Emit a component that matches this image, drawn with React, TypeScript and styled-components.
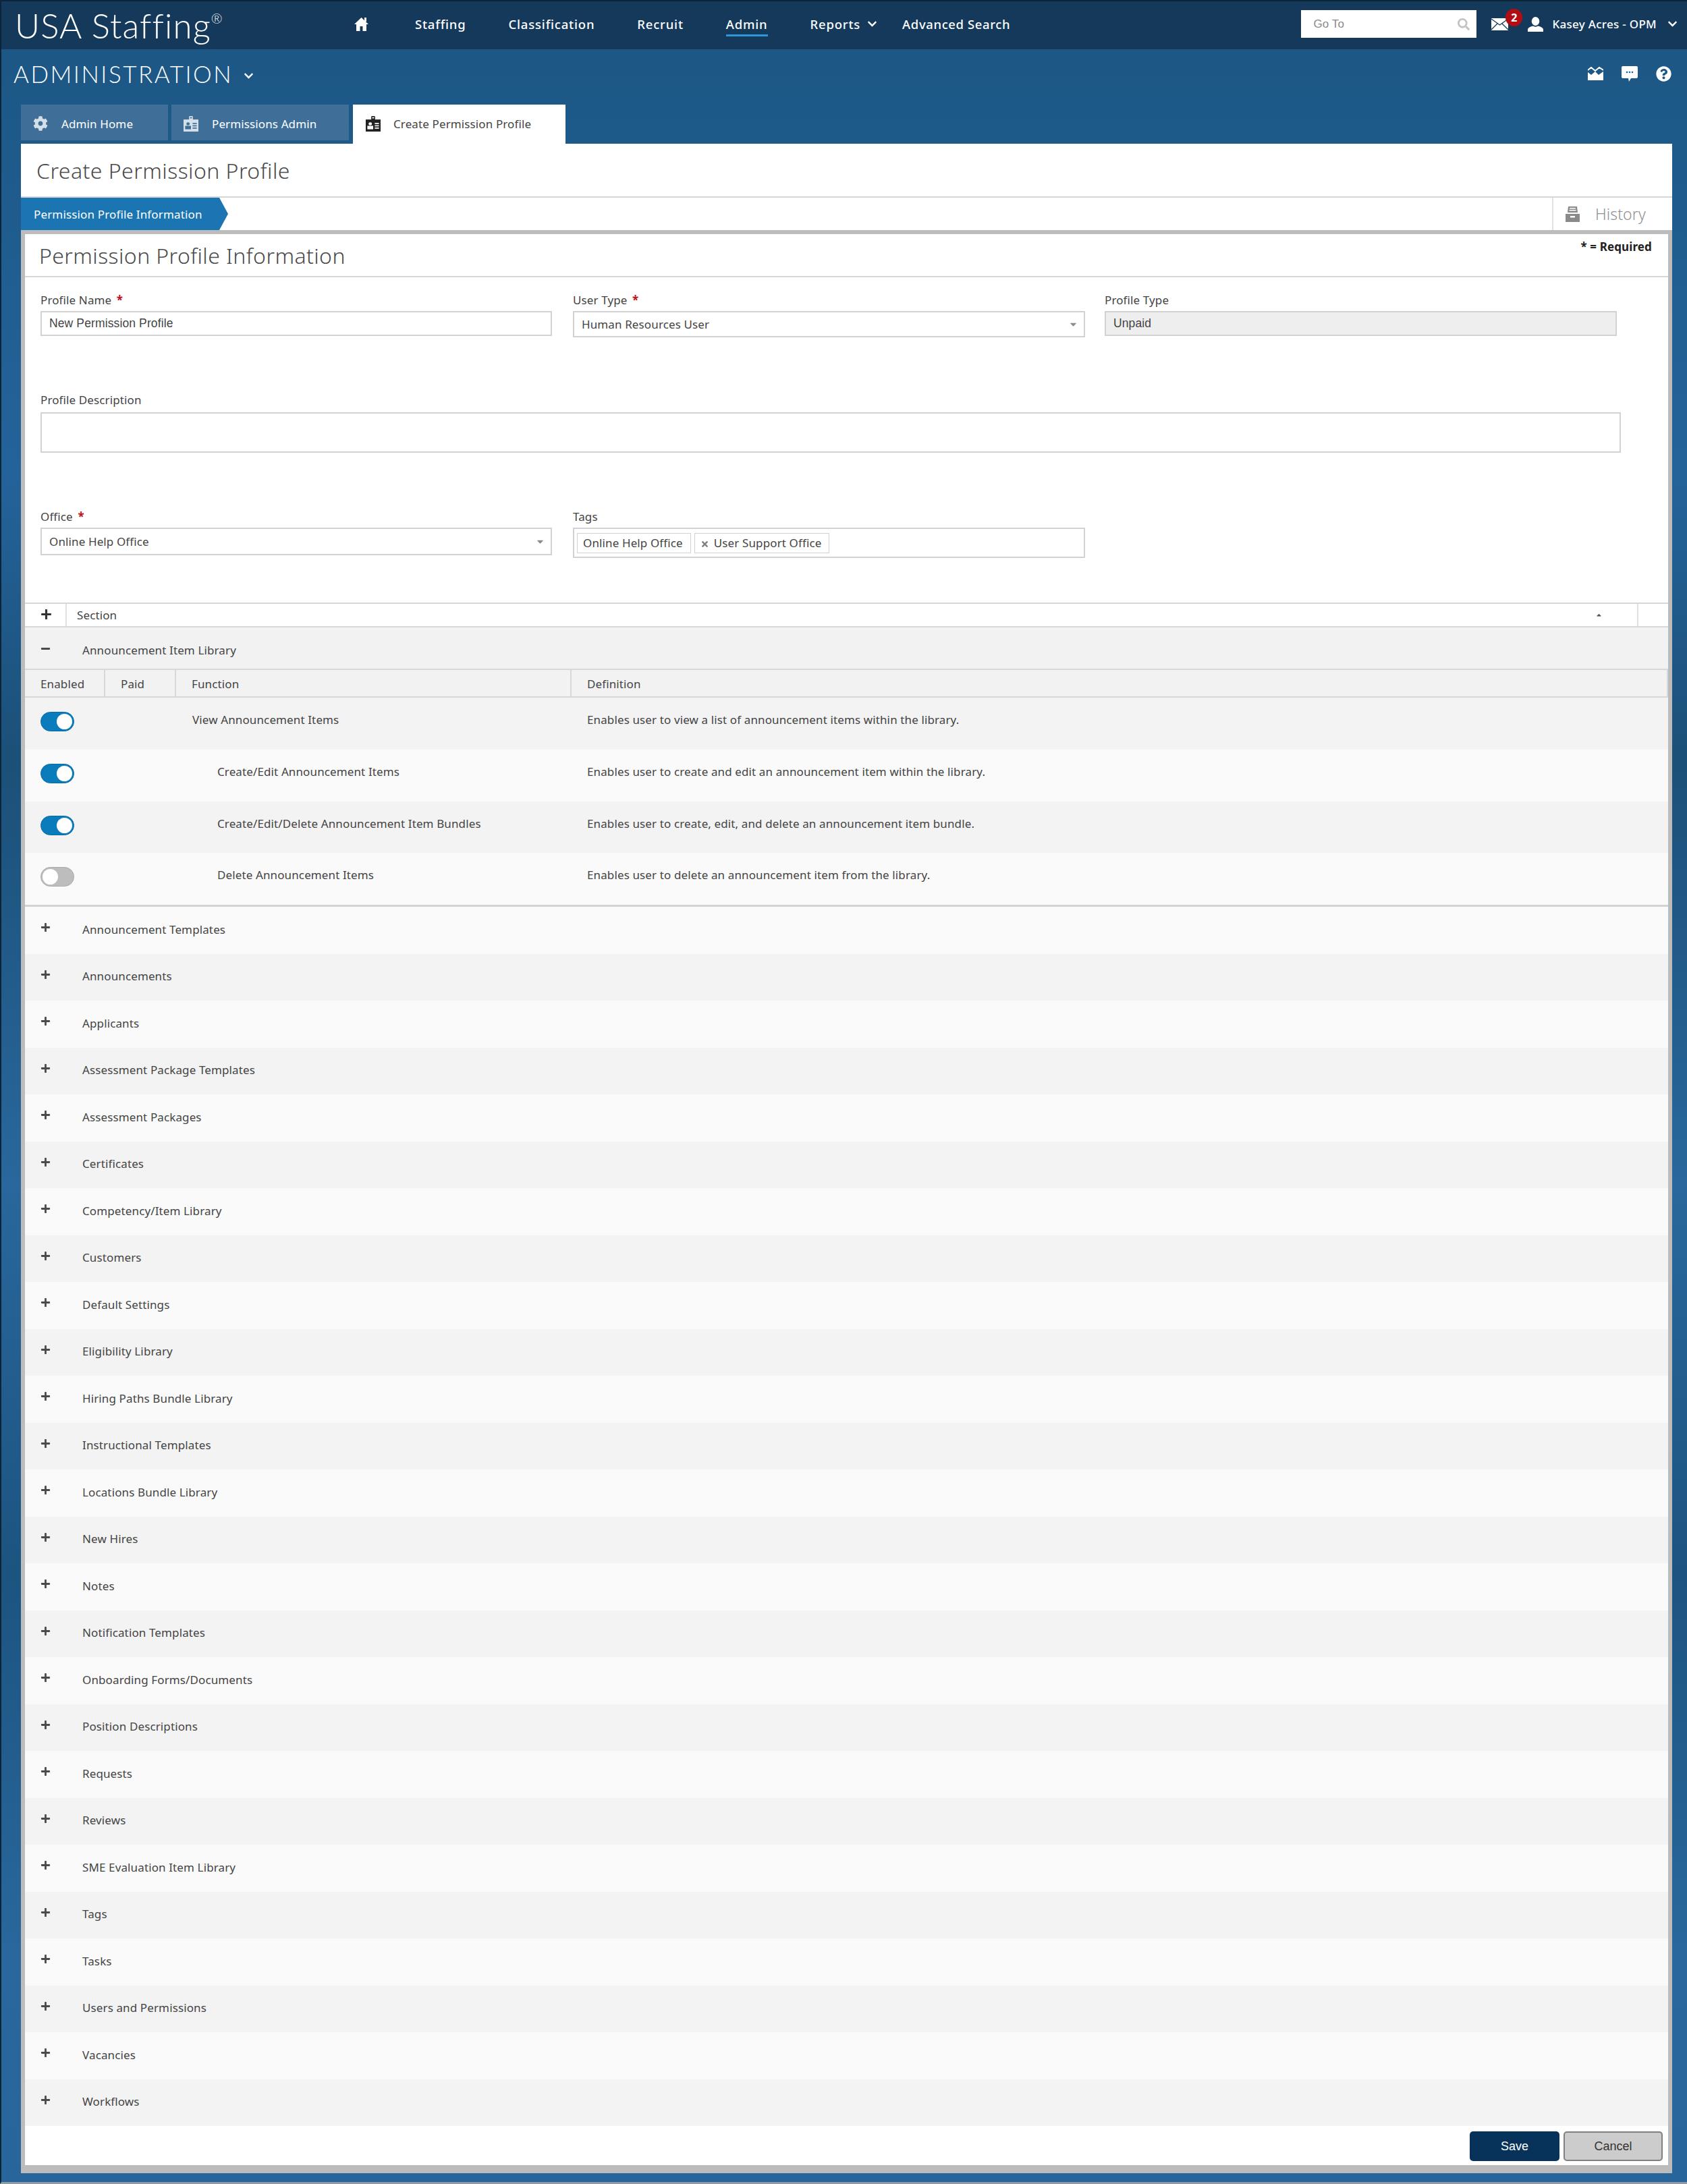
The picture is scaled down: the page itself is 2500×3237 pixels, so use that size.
import React from 'react';
import styled, { createGlobalStyle } from 'styled-components';
import { FaCog, FaSearch, FaChevronDown, FaQuestionCircle, FaCaretDown, FaCaretUp, FaPlus, FaMinus, FaTimes } from 'react-icons/fa';

const GlobalStyle = createGlobalStyle`
  html, body {
    margin: 0;
    padding: 0;
    background: #1f5d8f;
  }
  * {
    box-sizing: border-box;
  }
`;

const FONT = `'Noto Sans', 'Open Sans', sans-serif`;

const Page = styled.div`
  width: 2500px;
  height: 3237px;
  overflow: hidden;
  font-family: ${FONT};
  letter-spacing: 0.12px;
  color: #333;
  border-left: 2px solid #0c2438;
  border-bottom: 3px solid #8e9aa4;
  background: linear-gradient(180deg, #1c5785 74px, #24639a 700px, #1b5078 1125px, #29679c 1755px, #1c5480 2333px, #29679c 2890px, #27659a 3237px);
`;

const TopBar = styled.header`
  height: 73px;
  display: flex;
  align-items: center;
  background: #15395b;
  border-top: 2px solid #0c2438;
  padding: 0 0 4px 20px;
  color: #fff;
`;

const Logo = styled.div`
  width: 503px;
  font-family: 'Lato', sans-serif;
  font-weight: 300;
  font-size: 51px;
  letter-spacing: 1.1px;
  line-height: 60px;
  margin-top: 4px;
  sup {
    font-size: 20px;
    vertical-align: 22px;
    line-height: 0;
    letter-spacing: 0;
  }
`;

const Nav = styled.nav`
  display: flex;
  align-items: center;
  gap: 63px;
  font-size: 18.5px;
  font-weight: 500;
  letter-spacing: 0.8px;
`;

const HomeLink = styled.span`
  display: flex;
  margin-right: 6px;
`;

const NavItem = styled.span<{ $active?: boolean; $tight?: boolean }>`
  position: relative;
  display: flex;
  align-items: center;
  gap: 10px;
  height: 34px;
  margin-top: 3px;
  margin-left: ${p => (p.$tight ? -26 : 0)}px;
  letter-spacing: ${p => (p.$tight ? 0.6 : 0.8)}px;
  border-bottom: 3px solid ${p => (p.$active ? '#2f97d6' : 'transparent')};
  svg {
    font-size: 15px;
  }
`;

const TopRight = styled.div`
  margin-left: auto;
  display: flex;
  align-items: center;
  padding-right: 14px;
`;

const GoTo = styled.div`
  width: 260px;
  height: 41px;
  background: #fff;
  display: flex;
  align-items: center;
  justify-content: space-between;
  padding: 0 10px 0 18px;
  font-family: 'Liberation Sans', sans-serif;
  font-size: 17px;
  color: #8a8a8a;
  svg {
    color: #c4c4c4;
    font-size: 18px;
  }
`;

const Mail = styled.span`
  position: relative;
  display: flex;
  margin: 0 29px 0 22px;
`;

const Badge = styled.span`
  position: absolute;
  left: 21px;
  top: -14px;
  width: 25px;
  height: 26px;
  border-radius: 50%;
  background: #b30d14;
  color: #fff;
  font-size: 16px;
  font-weight: 700;
  line-height: 26px;
  text-align: center;
`;

const UserName = styled.span`
  margin: 0 16px 0 13px;
  font-size: 17px;
  font-weight: 500;
  letter-spacing: 0.3px;
  white-space: nowrap;
`;

const SubHeader = styled.div`
  height: 82px;
  display: flex;
  align-items: center;
  justify-content: space-between;
  padding: 0 23px 10px 18px;
  color: #fff;
`;

const ModuleTitle = styled.h1`
  margin: 0;
  display: flex;
  align-items: center;
  gap: 16px;
  font-family: 'Lato', sans-serif;
  font-weight: 300;
  font-size: 35px;
  letter-spacing: 2.5px;
  svg {
    font-size: 15px;
    margin-top: 6px;
  }
`;

const ActionIcons = styled.div`
  display: flex;
  align-items: center;
  gap: 27px;
`;

const Content = styled.div`
  margin: 0 22px 0 29px;
`;

const Tabs = styled.div`
  display: flex;
  align-items: flex-start;
  height: 58px;
  gap: 5px;
`;

const Tab = styled.div<{ $active?: boolean; $width: number }>`
  width: ${p => p.$width}px;
  height: ${p => (p.$active ? 58 : 53)}px;
  display: flex;
  align-items: center;
  padding-left: ${p => (p.$active ? 19 : 18)}px;
  padding-top: ${p => (p.$active ? 0 : 3)}px;
  padding-bottom: ${p => (p.$active ? 2 : 0)}px;
  gap: ${p => (p.$active ? 19 : 20)}px;
  font-size: 17px;
  background: ${p => (p.$active ? '#fff' : '#3f6f99')};
  color: ${p => (p.$active ? '#444' : '#fff')};
  margin-left: ${p => (p.$active ? 1 : 0)}px;
  svg {
    flex: none;
  }
`;

const PageTitle = styled.h2`
  margin: 0;
  height: 80px;
  display: flex;
  align-items: center;
  background: #fff;
  padding: 0 0 0 23px;
  font-family: ${FONT};
  font-weight: 300;
  font-size: 32px;
  letter-spacing: 0.45px;
  color: #4a4a4a;
  border-bottom: 2px solid #d6d6d6;
`;

const StepBar = styled.div`
  height: 48px;
  display: flex;
  justify-content: space-between;
  background: #fff;
`;

const Step = styled.div`
  width: 307px;
  display: flex;
  align-items: center;
  padding-left: 19px;
  background: #1b75b3;
  color: #fff;
  font-size: 17px;
  letter-spacing: 0.15px;
  clip-path: polygon(0 0, 294px 0, 100% 50%, 294px 100%, 0 100%);
`;

const HistoryTab = styled.div`
  width: 178px;
  display: flex;
  align-items: center;
  gap: 23px;
  padding-left: 18px;
  border-left: 2px solid #e2e2e2;
  font-size: 23px;
  font-weight: 300;
  color: #8f8f8f;
`;

const Frame = styled.div`
  border: 6px solid #bcbcbc;
  border-bottom-width: 12px;
  background: #fff;
  height: 2880px;
`;

const PanelHead = styled.div`
  height: 64px;
  display: flex;
  justify-content: space-between;
  border-bottom: 2px solid #d6d6d6;
  padding: 0 24px 0 21px;
`;

const PanelTitle = styled.h3`
  margin: 0;
  font-weight: 300;
  font-size: 32px;
  line-height: 64px;
  letter-spacing: 0.4px;
  color: #4a4a4a;
`;

const Required = styled.span`
  font-size: 17px;
  font-weight: 700;
  line-height: 38px;
  color: #222;
`;

const Form = styled.div`
  height: 482px;
  padding: 22px 0 0 23px;
`;

const FieldRow = styled.div<{ $height: number }>`
  height: ${p => p.$height}px;
  display: grid;
  grid-template-columns: 789px 788px 759px;
  align-items: start;
`;

const Field = styled.label<{ $width?: number }>`
  display: block;
  width: ${p => p.$width ?? 759}px;
`;

const FieldLabel = styled.div`
  height: 28px;
  font-size: 17px;
  line-height: 24px;
  color: #444;
  b {
    color: #c1121c;
    font-weight: 700;
    margin-left: 3px;
  }
`;

const Box = styled.div<{ $height: number; $disabled?: boolean; $plain?: boolean }>`
  height: ${p => p.$height}px;
  display: flex;
  align-items: center;
  justify-content: space-between;
  padding: 0 11px;
  border: 2px solid #d2d2d2;
  background: ${p => (p.$disabled ? '#eeeeee' : '#fff')};
  font-family: ${p => (p.$plain ? `'Liberation Sans', sans-serif` : 'inherit')};
  font-size: ${p => (p.$plain ? 17.5 : 17)}px;
  color: #444;
  svg {
    color: #8c8c8c;
    font-size: 15px;
    margin-right: -3px;
  }
`;

const DescriptionBox = styled.div`
  width: 2342px;
  height: 60px;
  margin-top: 2px;
  border: 2px solid #d2d2d2;
`;

const TagBox = styled.div`
  height: 45px;
  display: flex;
  align-items: center;
  gap: 5px;
  padding: 0 4px;
  border: 2px solid #d2d2d2;
`;

const Chip = styled.span`
  height: 30px;
  display: flex;
  align-items: center;
  gap: 7px;
  padding: 0 11px 0 8px;
  border: 1px solid #d2d2d2;
  font-size: 17px;
  color: #444;
  svg {
    color: #808080;
    font-size: 13px;
    margin-top: 3px;
  }
`;

const SectionHead = styled.div`
  position: relative;
  height: 37px;
  display: grid;
  grid-template-columns: 62px 1fr;
  align-items: stretch;
  border-top: 2px solid #d8d8d8;
  border-bottom: 2px solid #d8d8d8;
  font-size: 17px;
  color: #444;
  padding-right: 60px;
`;

const ExpandAll = styled.span`
  display: flex;
  align-items: center;
  justify-content: center;
  padding: 0 0 2px 2px;
  border-right: 2px solid #e0e0e0;
  font-size: 17px;
  color: #333;
`;

const SectionText = styled.span`
  display: flex;
  align-items: center;
  justify-content: space-between;
  padding: 0 37px 0 15px;
  svg {
    font-size: 11px;
    color: #555;
  }
`;

const SectionEnd = styled.span`
  position: absolute;
  right: 44px;
  top: 0;
  bottom: 0;
  width: 2px;
  background: #e0e0e0;
`;

const OpenGroup = styled.div`
  background: #f2f2f2;
  border-bottom: 3px solid #d2d2d2;
`;

const GroupTitle = styled.div`
  height: 63px;
  display: flex;
  align-items: center;
  padding: 6px 0 0 23px;
  gap: 29px;
  font-size: 17px;
  color: #444;
  border-bottom: 2px solid #d8d8d8;
`;

const ToggleGlyph = styled.span`
  width: 33px;
  display: flex;
  margin-top: -5px;
  color: #4a4a4a;
  font-size: 15px;
`;

const ColumnsHead = styled.div`
  height: 41px;
  display: grid;
  grid-template-columns: 119px 105px 586px 1fr;
  border-bottom: 2px solid #d8d8d8;
  border-right: 2px solid #d8d8d8;
  font-size: 17px;
  color: #444;
`;

const ColumnCell = styled.span<{ $pad: number }>`
  display: flex;
  align-items: center;
  padding: 2px 0 0 ${p => p.$pad}px;
  border-right: 2px solid #d8d8d8;
  &:last-child {
    border-right: 0;
  }
`;

const PermissionRow = styled.div<{ $odd: boolean }>`
  height: 76.75px;
  display: grid;
  grid-template-columns: 211px 576px 1fr;
  align-items: flex-start;
  padding-left: 23px;
  background: ${p => (p.$odd ? '#f3f3f3' : '#fafafa')};
  font-size: 17px;
  color: #444;
`;

const Switch = styled.span<{ $on: boolean }>`
  position: relative;
  display: block;
  width: 50px;
  height: 29px;
  margin-top: 21px;
  border-radius: 15px;
  background: ${p => (p.$on ? '#0a7cbc' : '#bdbdbd')};
  border: 1px solid ${p => (p.$on ? '#066ca8' : '#aaa')};
`;

const Knob = styled.span<{ $on: boolean }>`
  position: absolute;
  top: 2px;
  left: ${p => (p.$on ? 23 : 2)}px;
  width: 23px;
  height: 23px;
  border-radius: 50%;
  background: #fff;
`;

const FunctionName = styled.span<{ $child: boolean }>`
  padding-left: ${p => (p.$child ? 51 : 14)}px;
  line-height: 24px;
  margin-top: 21px;
`;

const DefinitionText = styled.span`
  padding-left: 23px;
  line-height: 24px;
  margin-top: 21px;
`;

const Groups = styled.div`
  display: grid;
  grid-auto-rows: 69.5px;
`;

const GroupRow = styled.div<{ $odd: boolean }>`
  display: flex;
  align-items: center;
  padding: 0 0 3px 23px;
  gap: 29px;
  background: ${p => (p.$odd ? '#f3f3f3' : '#fafafa')};
  font-size: 17px;
  color: #444;
`;

const Footer = styled.div`
  height: 58px;
  display: flex;
  justify-content: flex-end;
  align-items: flex-start;
  gap: 6px;
  padding: 8px 8px 0 0;
`;

const Button = styled.button<{ $primary?: boolean }>`
  width: ${p => (p.$primary ? 133 : 147)}px;
  height: 44px;
  border-radius: 5px;
  font-family: 'Liberation Sans', sans-serif;
  font-size: 18px;
  color: ${p => (p.$primary ? '#fff' : '#333')};
  background: ${p => (p.$primary ? '#07335a' : '#cccccc')};
  border: ${p => (p.$primary ? '0' : '2px solid #808080')};
`;

function HomeIcon() {
  return (
    <svg width="21" height="21" viewBox="0 0 21 21" fill="#fff">
      <path d="M10.5 1L21 11h-3v10h-5.500v-7h-4v7H3V11H0z" />
      <rect x="15" y="1" width="3" height="6" />
    </svg>
  );
}

function BadgeIcon({ color, hole }: { color: string; hole: string }) {
  return (
    <svg width="22" height="23" viewBox="0 0 23 27" preserveAspectRatio="none">
      <rect x="8.5" y="0" width="6" height="7" rx="1.5" fill={color} />
      <rect x="0" y="6" width="23" height="21" fill={color} />
      <rect x="10" y="2" width="3" height="2" fill={hole} />
      <circle cx="7" cy="13.5" r="2.6" fill={hole} />
      <rect x="2.5" y="17" width="9" height="6" fill={hole} />
      <rect x="14" y="12" width="6.5" height="2" fill={hole} />
      <rect x="14" y="16" width="6.5" height="2" fill={hole} />
      <rect x="14" y="20" width="6.5" height="2" fill={hole} />
    </svg>
  );
}

function MailIcon() {
  return (
    <svg width="25" height="18" viewBox="0 0 25 18">
      <rect width="25" height="18" fill="#fff" />
      <path d="M0 1l12.5 9L25 1M0 17l9-9M25 17l-9-9" fill="none" stroke="#15395b" strokeWidth="1.3" />
    </svg>
  );
}

function UserIcon() {
  return (
    <svg width="23" height="22" viewBox="0 0 23 22" fill="#fff">
      <ellipse cx="11.5" cy="6.5" rx="5.8" ry="6.5" />
      <path d="M0 22v-3c0-3 4-4.500 7.500-5.500 2.500 1.500 5.500 1.500 8 0C19 14.500 23 16 23 19v3z" />
    </svg>
  );
}

function ChartIcon() {
  return (
    <svg width="23" height="20" viewBox="0 0 23 20" fill="#fff">
      <path d="M0 8l5 4 6-5 5 5 7-5v13H0z" />
      <path d="M0 5l5-4 6 5 6-5 6 4" fill="none" stroke="#fff" strokeWidth="2" />
    </svg>
  );
}

function CommentIcon() {
  return (
    <svg width="24" height="23" viewBox="0 0 24 23">
      <path d="M2 0h20a2 2 0 0 1 2 2v14a2 2 0 0 1-2 2h-8l-3 5-1-5H2a2 2 0 0 1-2-2V2a2 2 0 0 1 2-2z" fill="#fff" />
      <circle cx="8" cy="9" r="1.300" fill="#1f5d8f" />
      <circle cx="12" cy="9" r="1.300" fill="#1f5d8f" />
      <circle cx="16" cy="9" r="1.300" fill="#1f5d8f" />
    </svg>
  );
}

function ArchiveIcon() {
  return (
    <svg width="21" height="23" viewBox="0 0 21 23" fill="#8a8a8a">
      <path d="M4 0h13l1 9H3zM6 2v1.500h9V2zM5.500 5v1.500h10V5z" fillRule="evenodd" />
      <path d="M0 11h21v12H0zM7 14v2.500h7V14z" fillRule="evenodd" />
    </svg>
  );
}

const PERMISSIONS = [
  { name: 'View Announcement Items', definition: 'Enables user to view a list of announcement items within the library.', on: true, child: false },
  { name: 'Create/Edit Announcement Items', definition: 'Enables user to create and edit an announcement item within the library.', on: true, child: true },
  { name: 'Create/Edit/Delete Announcement Item Bundles', definition: 'Enables user to create, edit, and delete an announcement item bundle.', on: true, child: true },
  { name: 'Delete Announcement Items', definition: 'Enables user to delete an announcement item from the library.', on: false, child: true },
];

const GROUPS = [
  'Announcement Templates', 'Announcements', 'Applicants', 'Assessment Package Templates', 'Assessment Packages',
  'Certificates', 'Competency/Item Library', 'Customers', 'Default Settings', 'Eligibility Library',
  'Hiring Paths Bundle Library', 'Instructional Templates', 'Locations Bundle Library', 'New Hires', 'Notes',
  'Notification Templates', 'Onboarding Forms/Documents', 'Position Descriptions', 'Requests', 'Reviews',
  'SME Evaluation Item Library', 'Tags', 'Tasks', 'Users and Permissions', 'Vacancies', 'Workflows',
];

export default function App() {
  return (
    <Page>
      <GlobalStyle />
      <TopBar>
        <Logo>USA Staffing<sup>®</sup></Logo>
        <Nav>
          <HomeLink><HomeIcon /></HomeLink>
          <NavItem>Staffing</NavItem>
          <NavItem>Classification</NavItem>
          <NavItem>Recruit</NavItem>
          <NavItem $active>Admin</NavItem>
          <NavItem>Reports <FaChevronDown /></NavItem>
          <NavItem $tight>Advanced Search</NavItem>
        </Nav>
        <TopRight>
          <GoTo>Go To <FaSearch /></GoTo>
          <Mail><MailIcon /><Badge>2</Badge></Mail>
          <UserIcon />
          <UserName>Kasey Acres - OPM</UserName>
          <FaChevronDown size={15} />
        </TopRight>
      </TopBar>
      <SubHeader>
        <ModuleTitle>ADMINISTRATION <FaChevronDown /></ModuleTitle>
        <ActionIcons>
          <ChartIcon />
          <CommentIcon />
          <FaQuestionCircle size={23} />
        </ActionIcons>
      </SubHeader>
      <Content>
        <Tabs>
          <Tab $width={218}><FaCog size={22} color="#d5dfe8" />Admin Home</Tab>
          <Tab $width={263}><BadgeIcon color="#d5dfe8" hole="#3f6f99" />Permissions Admin</Tab>
          <Tab $active $width={315}><BadgeIcon color="#222" hole="#fff" />Create Permission Profile</Tab>
        </Tabs>
        <PageTitle>Create Permission Profile</PageTitle>
        <StepBar>
          <Step>Permission Profile Information</Step>
          <HistoryTab><ArchiveIcon />History</HistoryTab>
        </StepBar>
        <Frame>
          <PanelHead>
            <PanelTitle>Permission Profile Information</PanelTitle>
            <Required>* = Required</Required>
          </PanelHead>
          <Form>
            <FieldRow $height={148}>
              <Field $width={758}>
                <FieldLabel>Profile Name <b>*</b></FieldLabel>
                <Box $height={37} $plain>New Permission Profile</Box>
              </Field>
              <Field>
                <FieldLabel>User Type <b>*</b></FieldLabel>
                <Box $height={39}>Human Resources User <FaCaretDown /></Box>
              </Field>
              <Field>
                <FieldLabel>Profile Type</FieldLabel>
                <Box $height={37} $disabled $plain>Unpaid</Box>
              </Field>
            </FieldRow>
            <FieldRow $height={173}>
              <Field $width={2342}>
                <FieldLabel>Profile Description</FieldLabel>
                <DescriptionBox />
              </Field>
            </FieldRow>
            <FieldRow $height={100}>
              <Field $width={758}>
                <FieldLabel>Office <b>*</b></FieldLabel>
                <Box $height={41}>Online Help Office <FaCaretDown /></Box>
              </Field>
              <Field>
                <FieldLabel>Tags</FieldLabel>
                <TagBox>
                  <Chip>Online Help Office</Chip>
                  <Chip><FaTimes />User Support Office</Chip>
                </TagBox>
              </Field>
            </FieldRow>
          </Form>
          <SectionHead>
            <ExpandAll><FaPlus /></ExpandAll>
            <SectionText>Section <FaCaretUp /></SectionText>
            <SectionEnd />
          </SectionHead>
          <OpenGroup>
            <GroupTitle><ToggleGlyph><FaMinus /></ToggleGlyph>Announcement Item Library</GroupTitle>
            <ColumnsHead>
              <ColumnCell $pad={23}>Enabled</ColumnCell>
              <ColumnCell $pad={23}>Paid</ColumnCell>
              <ColumnCell $pad={23}>Function</ColumnCell>
              <ColumnCell $pad={23}>Definition</ColumnCell>
            </ColumnsHead>
            {PERMISSIONS.map((p, i) => (
              <PermissionRow key={p.name} $odd={i % 2 === 0}>
                <Switch $on={p.on}><Knob $on={p.on} /></Switch>
                <FunctionName $child={p.child}>{p.name}</FunctionName>
                <DefinitionText>{p.definition}</DefinitionText>
              </PermissionRow>
            ))}
          </OpenGroup>
          <Groups>
            {GROUPS.map((g, i) => (
              <GroupRow key={g} $odd={i % 2 === 1}>
                <ToggleGlyph><FaPlus /></ToggleGlyph>
                {g}
              </GroupRow>
            ))}
          </Groups>
          <Footer>
            <Button $primary>Save</Button>
            <Button>Cancel</Button>
          </Footer>
        </Frame>
      </Content>
    </Page>
  );
}
